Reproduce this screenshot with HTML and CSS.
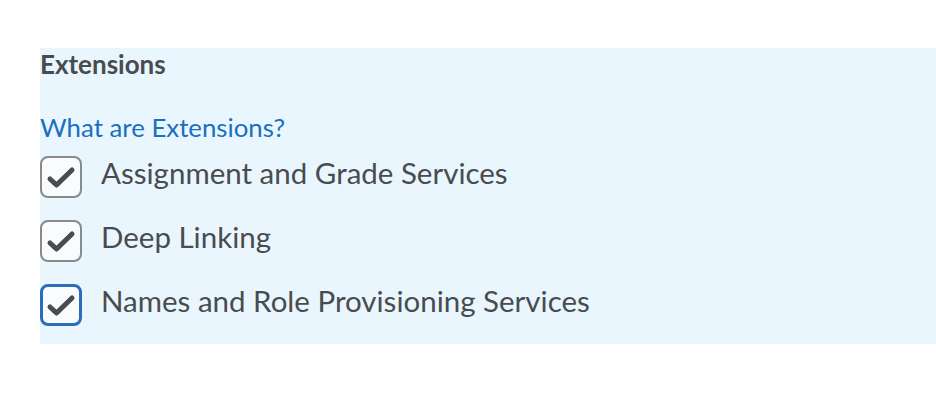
FILE: index.html
```html
<!DOCTYPE html>
<html lang="en">

<head>
    <meta charset="UTF-8">
    <meta name="viewport" content="width=device-width, initial-scale=1.0">
    <title>Extensions</title>
    <link rel="stylesheet" href="styles.css">
</head>

<body>
    <div class="panel">
        <h2 class="title">Extensions</h2>
        <a class="help" href="#">What are Extensions?</a>
        <ul class="list">
            <li class="item">
                <span class="box">
                    <svg viewBox="0 0 42 42"><path d="M10 23 L16.5 29 L32 14"/></svg>
                </span>
                <span class="label">Assignment and Grade Services</span>
            </li>
            <li class="item">
                <span class="box">
                    <svg viewBox="0 0 42 42"><path d="M10 23 L16.5 29 L32 14"/></svg>
                </span>
                <span class="label">Deep Linking</span>
            </li>
            <li class="item">
                <span class="box focus">
                    <svg viewBox="0 0 42 42"><path d="M10 23 L16.5 29 L32 14"/></svg>
                </span>
                <span class="label">Names and Role Provisioning Services</span>
            </li>
        </ul>
    </div>
</body>

</html>
```

FILE: styles.css
```css
* {
    margin: 0;
    padding: 0;
    box-sizing: border-box;
}

body {
    font-family: Lato, "Noto Sans", sans-serif;
    color: #494c4e;
    background-color: #fff;
}

.panel {
    margin: 48px 0 0 40px;
    height: 296px;
    background-color: #e9f6fe;
}

.title {
    font-size: 26px;
    font-weight: 700;
    line-height: 32px;
}

.help {
    display: block;
    margin-top: 31px;
    font-size: 25.8px;
    line-height: 32px;
    color: #1a6fc0;
    text-decoration: none;
}

.list {
    list-style: none;
    display: flex;
    flex-direction: column;
    gap: 22px;
    margin-top: 13px;
}

.item {
    display: flex;
    align-items: center;
    gap: 19px;
    height: 42px;
}

.box {
    display: flex;
    align-items: center;
    justify-content: center;
    flex-shrink: 0;
    width: 42px;
    height: 42px;
    border: 2px solid #878b8e;
    border-radius: 8px;
    background-color: #f9fbfd;
}

.box.focus {
    border: 3px solid #2a6ebb;
}

.box svg {
    width: 42px;
    height: 42px;
    flex-shrink: 0;
}

.box path {
    fill: none;
    stroke: #494c4e;
    stroke-width: 5;
    stroke-linecap: round;
    stroke-linejoin: round;
}

.label {
    font-size: 29.5px;
    line-height: 35px;
    margin-top: -9px;
}
```
